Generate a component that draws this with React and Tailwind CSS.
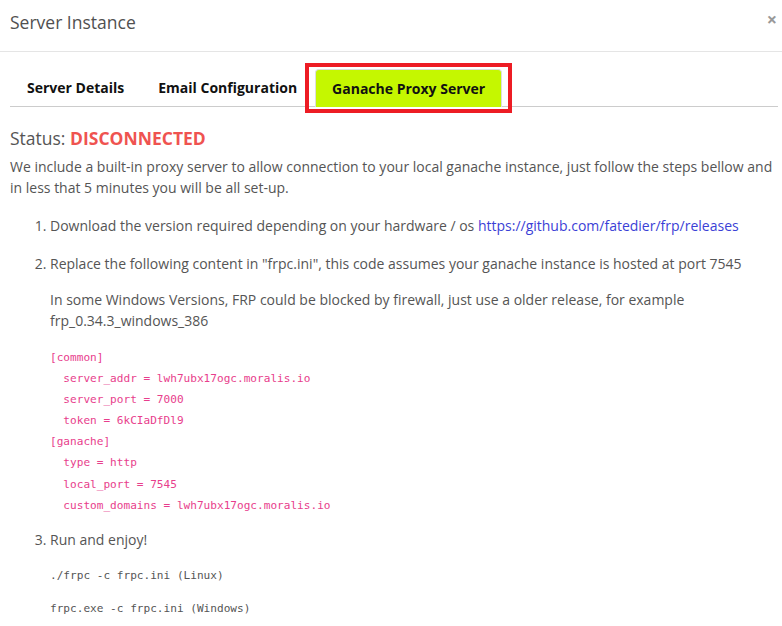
import React from "react";

const tabs = ["Server Details", "Email Configuration", "Ganache Proxy Server"];

const config = [
  "[common]",
  "  server_addr = lwh7ubx17ogc.moralis.io",
  "  server_port = 7000",
  "  token = 6kCIaDfDl9",
  "[ganache]",
  "  type = http",
  "  local_port = 7545",
  "  custom_domains = lwh7ubx17ogc.moralis.io",
];

const mono = "font-['DejaVu_Sans_Mono','Liberation_Mono',monospace]";

const App = () => {
  const active = 2;

  return (
    <div className="w-[782px] h-[626px] overflow-hidden bg-white text-[#555] font-['Open_Sans','Noto_Sans',sans-serif]">
      {/* header */}
      <div className="flex items-center justify-between h-[52px] pl-[10px] pr-[5px] pb-[7px] border-b border-[#e5e5e5]">
        <h4 className="text-[17.5px] text-[#505050]">Server Instance</h4>
        <button className="text-[18px] font-bold leading-none text-[#999] mt-[-6px]">×</button>
      </div>

      <div className="pl-[10px] pr-[4px]">
        {/* tabs */}
        <div className="flex mt-[16px] pl-px border-b border-[#ccc]">
          {tabs.map((t, i) =>
            i === active ? (
              <div key={t} className="relative">
                <div className="px-[16px] pt-[8px] pb-[8px] mt-px mb-[-1px] text-[14px] font-bold leading-[21px] text-[#111] bg-[#c5f700] border border-b-0 border-[#ddd] rounded-t-[4px]">
                  {t}
                </div>
                <div className="absolute left-[-10px] right-[-10px] top-[-5px] bottom-[-7px] border-4 border-[#ed1c24]" />
              </div>
            ) : (
              <div key={t} className="px-[16px] pt-[9px] pb-[8px] mr-[2px] text-[14px] font-bold leading-[21px] text-[#111]">
                {t}
              </div>
            )
          )}
        </div>

        {/* body */}
        <div className="mt-[18px] text-[17.5px] leading-[27px]">
          Status: <span className="font-bold text-[#ef5350]">DISCONNECTED</span>
        </div>
        <p className="mt-[4px] text-[14px] leading-[21px]">
          We include a built-in proxy server to allow connection to your local ganache instance, just follow the steps bellow and in less that 5 minutes you will be all set-up.
        </p>

        <ol className="list-decimal pl-[40px] mt-[17px] text-[14px] leading-[21px]">
          <li>
            Download the version required depending on your hardware / os{" "}
            <a className="text-[#3b3fd6]">https://github.com/fatedier/frp/releases</a>
          </li>
          <li className="mt-[17px]">
            Replace the following content in "frpc.ini", this code assumes your ganache instance is hosted at port 7545
            <p className="mt-[15px]">
              In some Windows Versions, FRP could be blocked by firewall, just use a older release, for example frp_0.34.3_windows_386
            </p>
            <pre className={`mt-[16px] text-[11.1px] leading-[21.1px] text-[#e83e8c] ${mono}`}>
              {config.join("\n")}
            </pre>
          </li>
          <li className="mt-[13px]">
            Run and enjoy!
            <div className={`mt-[15px] text-[11.1px] leading-[21px] text-[#555] ${mono}`}>
              ./frpc -c frpc.ini (Linux)
            </div>
            <div className={`mt-[12px] text-[11.1px] leading-[21px] text-[#555] ${mono}`}>
              frpc.exe -c frpc.ini (Windows)
            </div>
          </li>
        </ol>
      </div>
    </div>
  );
};

export default App;
